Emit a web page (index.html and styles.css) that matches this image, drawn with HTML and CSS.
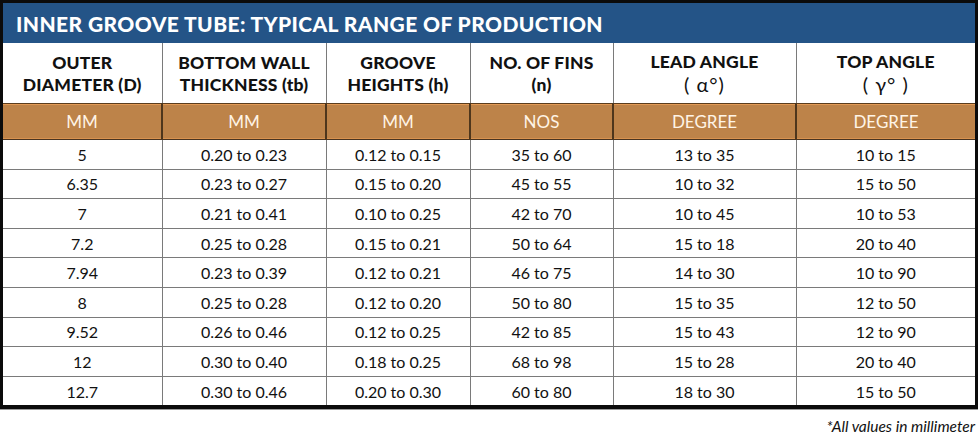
FILE: index.html
```html
<!DOCTYPE html>
<html>
<head>
<meta charset="utf-8">
<link rel="stylesheet" href="styles.css">
</head>
<body>
<div class="frame">
  <div class="title">INNER GROOVE TUBE: TYPICAL RANGE OF PRODUCTION</div>
  <table class="grid">
    <colgroup>
      <col class="c1"><col class="c2"><col class="c3"><col class="c4"><col class="c5"><col class="c6">
    </colgroup>
    <thead>
      <tr class="head">
        <th>OUTER<br>DIAMETER (D)</th>
        <th>BOTTOM WALL<br>THICKNESS (tb)</th>
        <th>GROOVE<br>HEIGHTS (h)</th>
        <th>NO. OF FINS<br>(n)</th>
        <th>LEAD ANGLE<br><span class="sym">( α°)</span></th>
        <th>TOP ANGLE<br><span class="sym">( γ° )</span></th>
      </tr>
      <tr class="units">
        <td>MM</td><td>MM</td><td>MM</td><td>NOS</td><td>DEGREE</td><td>DEGREE</td>
      </tr>
    </thead>
    <tbody>
      <tr><td>5</td><td>0.20 to 0.23</td><td>0.12 to 0.15</td><td>35 to 60</td><td>13 to 35</td><td>10 to 15</td></tr>
      <tr><td>6.35</td><td>0.23 to 0.27</td><td>0.15 to 0.20</td><td>45 to 55</td><td>10 to 32</td><td>15 to 50</td></tr>
      <tr><td>7</td><td>0.21 to 0.41</td><td>0.10 to 0.25</td><td>42 to 70</td><td>10 to 45</td><td>10 to 53</td></tr>
      <tr><td>7.2</td><td>0.25 to 0.28</td><td>0.15 to 0.21</td><td>50 to 64</td><td>15 to 18</td><td>20 to 40</td></tr>
      <tr><td>7.94</td><td>0.23 to 0.39</td><td>0.12 to 0.21</td><td>46 to 75</td><td>14 to 30</td><td>10 to 90</td></tr>
      <tr><td>8</td><td>0.25 to 0.28</td><td>0.12 to 0.20</td><td>50 to 80</td><td>15 to 35</td><td>12 to 50</td></tr>
      <tr><td>9.52</td><td>0.26 to 0.46</td><td>0.12 to 0.25</td><td>42 to 85</td><td>15 to 43</td><td>12 to 90</td></tr>
      <tr><td>12</td><td>0.30 to 0.40</td><td>0.18 to 0.25</td><td>68 to 98</td><td>15 to 28</td><td>20 to 40</td></tr>
      <tr><td>12.7</td><td>0.30 to 0.46</td><td>0.20 to 0.30</td><td>60 to 80</td><td>18 to 30</td><td>15 to 50</td></tr>
    </tbody>
  </table>
</div>
<p class="note">*All values in millimeter</p>
</body>
</html>
```

FILE: styles.css
```css
html, body {
  margin: 0;
  padding: 0;
  background: #ffffff;
}
body {
  width: 978px;
  font-family: "Lato", "Open Sans", sans-serif;
  color: #111111;
}
.frame {
  border: 3px solid #0b0b0b;
  border-top-width: 3px;
  border-bottom-width: 4px;
  box-shadow: 0 1px 0 #9a9a9a;
}
.title {
  height: 40px;
  background: #245487;
  color: #ffffff;
  font-weight: 900;
  font-size: 21px;
  line-height: 41px;
  padding-left: 13px;
  letter-spacing: 0.4px;
}
.grid {
  width: 972px;
  border-collapse: collapse;
  table-layout: fixed;
}
.c1 { width: 159px; }
.c2 { width: 164px; }
.c3 { width: 144px; }
.c4 { width: 143px; }
.c5 { width: 183px; }
.c6 { width: 179px; }
.grid th,
.grid td {
  padding: 0;
  text-align: center;
  border-left: 1px solid #7a7a7a;
}
.grid th:first-child,
.grid td:first-child {
  border-left: none;
}
.head th {
  height: 59px;
  font-weight: 900;
  font-size: 17.5px;
  line-height: 22px;
  padding-top: 1px;
  vertical-align: middle;
  letter-spacing: 0.2px;
}
.sym {
  font-weight: 400;
  font-size: 20px;
  letter-spacing: 1px;
}
.units td {
  height: 35px;
  background: #bd8349;
  color: #fff4e6;
  font-size: 17px;
  border-top: 1px solid #5a3c1d;
  border-bottom: 1px solid #4a3420;
  border-left: 2px solid #4e361c;
  box-shadow: inset 0 1px 0 #e39a55, inset 0 -1px 0 #d8924f;
}
.units td:first-child {
  border-left: none;
}
tbody td {
  height: 28.6px;
  font-size: 16px;
  border-top: 1px solid #7a7a7a;
}
tbody tr:first-child td {
  border-top: none;
}
.note {
  margin: 0;
  padding-top: 8px;
  padding-right: 3px;
  text-align: right;
  font-style: italic;
  font-size: 15.5px;
  color: #111111;
}
```
